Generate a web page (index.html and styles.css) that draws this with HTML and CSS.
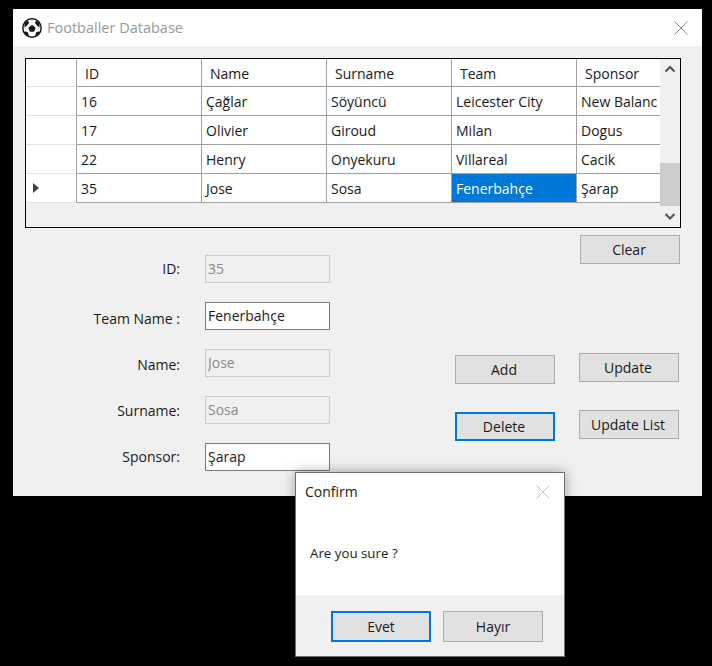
FILE: index.html
```html
<!DOCTYPE html>
<html lang="en">
<head>
<meta charset="UTF-8">
<meta name="viewport" content="width=device-width, initial-scale=1.0">
<title>Footballer Database</title>
<link rel="stylesheet" href="styles.css">
</head>
<body>

<div class="window main-window">
    <div class="titlebar">
        <svg class="ball" width="20" height="20" viewBox="0 0 20 20">
            <circle cx="10" cy="10" r="9.200" fill="#fff" stroke="#151515" stroke-width="1.500"/>
            <path d="M10 7l3.600 2.600-1.400 4.200H7.800L6.400 9.600z" fill="#151515"/>
            <path d="M2.500 5l3.500-2.500 1 2.500-3 3.500-1.500 1z" fill="#151515"/>
            <path d="M17.500 5L14 2.500 13 5l3 3.500 1.500 1z" fill="#151515"/>
            <path d="M2.500 13.500l3 .5 1.500 3.500-1 .5-3-2.500z" fill="#151515"/>
            <path d="M17.500 13.500l-3 .5-1.500 3.500 1 .5 3-2.500z" fill="#151515"/>
        </svg>
        <span class="window-title">Footballer Database</span>
        <svg class="close" width="14" height="14" viewBox="0 0 14 14"><path d="M.5.5l13 13M13.500.5l-13 13" stroke="#8c8c8c" fill="none"/></svg>
    </div>

    <div class="content">
        <div class="grid-box">
            <div class="grid-area">
                <table class="grid">
                    <thead>
                        <tr>
                            <th class="row-head"></th>
                            <th>ID</th>
                            <th>Name</th>
                            <th>Surname</th>
                            <th>Team</th>
                            <th class="last">Sponsor</th>
                        </tr>
                    </thead>
                    <tbody>
                        <tr>
                            <td class="row-head"></td>
                            <td>16</td>
                            <td>Çağlar</td>
                            <td>Söyüncü</td>
                            <td>Leicester City</td>
                            <td class="last"><div class="clip">New Balanc</div></td>
                        </tr>
                        <tr>
                            <td class="row-head"></td>
                            <td>17</td>
                            <td>Olivier</td>
                            <td>Giroud</td>
                            <td>Milan</td>
                            <td class="last">Dogus</td>
                        </tr>
                        <tr>
                            <td class="row-head"></td>
                            <td>22</td>
                            <td>Henry</td>
                            <td>Onyekuru</td>
                            <td>Villareal</td>
                            <td class="last">Cacik</td>
                        </tr>
                        <tr>
                            <td class="row-head"><span class="arrow"></span></td>
                            <td>35</td>
                            <td>Jose</td>
                            <td>Sosa</td>
                            <td class="selected">Fenerbahçe</td>
                            <td class="last">Şarap</td>
                        </tr>
                    </tbody>
                </table>
            </div>
            <div class="scrollbar">
                <svg width="20" height="17" viewBox="0 0 20 17"><path d="M5.500 12.500L10 8l4.500 4.500" stroke="#505050" stroke-width="2" fill="none"/></svg>
                <div class="track"><div class="thumb"></div></div>
                <svg width="20" height="17" viewBox="0 0 20 17"><path d="M5.500 4L10 8.500 14.500 4" stroke="#505050" stroke-width="2" fill="none"/></svg>
            </div>
        </div>

        <div class="lower">
            <div class="form">
                <label class="label-id">ID:</label>
                <input class="field" type="text" value="35" disabled>
                <label class="label-team">Team Name :</label>
                <input class="field" type="text" value="Fenerbahçe">
                <label class="label-name">Name:</label>
                <input class="field" type="text" value="Jose" disabled>
                <label>Surname:</label>
                <input class="field" type="text" value="Sosa" disabled>
                <label class="label-id">Sponsor:</label>
                <input class="field" type="text" value="Şarap">
            </div>
            <div class="actions-left">
                <button class="btn">Add</button>
                <button class="btn focused">Delete</button>
            </div>
            <div class="actions-right">
                <button class="btn">Clear</button>
                <button class="btn">Update</button>
                <button class="btn">Update List</button>
            </div>
        </div>
    </div>
</div>

<div class="window dialog">
    <div class="dialog-top">
        <div class="dialog-title">
            <span>Confirm</span>
            <svg class="close" width="14" height="14" viewBox="0 0 14 14"><path d="M.5.5l13 13M13.500.5l-13 13" stroke="#c4c4c4" fill="none"/></svg>
        </div>
        <p class="message">Are you sure ?</p>
    </div>
    <div class="dialog-footer">
        <button class="btn focused">Evet</button>
        <button class="btn">Hayır</button>
    </div>
</div>

</body>
</html>
```

FILE: styles.css
```css
body {
    margin: 0;
    height: 666px;
    overflow: hidden;
    background-color: #000;
    font-family: "Open Sans", "Noto Sans", sans-serif;
    font-size: 14px;
    color: #1a1a1a;
}

.window {
    position: absolute;
    box-sizing: border-box;
    background-color: #f0f0f0;
}

.main-window {
    left: 13px;
    top: 9px;
    width: 689px;
    height: 487px;
}

.titlebar {
    display: flex;
    align-items: center;
    height: 37px;
    padding: 0 14px 0 9px;
    background-color: #fff;
}

.ball {
    margin-right: 5px;
}

.window-title {
    flex: 1;
    font-size: 14.5px;
    color: #999;
}

.content {
    padding: 12px 22px 0 12px;
}

.grid-box {
    display: flex;
    box-sizing: border-box;
    width: 656px;
    height: 170px;
    border: 1px solid #000;
}

.grid-area {
    width: 634px;
    overflow: hidden;
}

.grid {
    table-layout: fixed;
    width: 635px;
    border-collapse: separate;
    border-spacing: 0;
}

.grid th,
.grid td {
    box-sizing: border-box;
    width: 125px;
    height: 29px;
    padding: 0 4px;
    background-color: #fff;
    border-right: 1px solid #a0a0a0;
    border-bottom: 1px solid #a0a0a0;
    font-weight: normal;
    text-align: left;
    white-space: nowrap;
}

.grid th {
    height: 28px;
    padding: 2px 4px 0 8px;
}

.grid .row-head {
    width: 51px;
    padding: 0 0 0 7px;
    border-bottom-color: #e4e4e4;
}

.grid .last {
    width: 84px;
    border-right: none;
}

.grid .selected {
    background-color: #0078d7;
    color: #fff;
}

.clip {
    overflow: hidden;
}

.arrow {
    display: block;
    width: 0;
    height: 0;
    border-left: 6px solid #404040;
    border-top: 5px solid transparent;
    border-bottom: 5px solid transparent;
}

.scrollbar {
    display: flex;
    flex-direction: column;
    width: 20px;
    background-color: #f0f0f0;
}

.track {
    flex: 1;
    display: flex;
    flex-direction: column;
    justify-content: flex-end;
}

.thumb {
    height: 43px;
    margin-bottom: 4px;
    background-color: #cdcdcd;
}

.lower {
    display: flex;
}

.form {
    display: grid;
    grid-template-columns: 155px 125px;
    grid-auto-rows: 28px;
    column-gap: 25px;
    row-gap: 19px;
    align-items: center;
    align-self: flex-start;
    margin-top: 27px;
}

.form label {
    text-align: right;
}

.form .label-id {
    padding-bottom: 2px;
}

.form .label-team {
    padding-top: 4px;
}

.form .label-name {
    padding-top: 2px;
}

.field {
    box-sizing: border-box;
    width: 125px;
    height: 28px;
    padding: 0 2px 2px;
    border: 1px solid #7a7a7a;
    background-color: #fff;
    font: inherit;
    color: #1a1a1a;
}

.field:disabled {
    border-color: #ccc;
    background-color: #f0f0f0;
    color: #8a8a8a;
}

.btn {
    box-sizing: border-box;
    width: 100px;
    height: 29px;
    padding: 0 2px 0 0;
    border: 1px solid #adadad;
    background-color: #e1e1e1;
    font: inherit;
    color: #1a1a1a;
}

.btn.focused {
    border: 2px solid #0078d7;
}

.actions-left {
    display: flex;
    flex-direction: column;
    gap: 28px;
    margin-top: 127px;
    margin-left: 125px;
}

.actions-right {
    display: flex;
    flex-direction: column;
    margin-top: 7px;
    margin-left: 25px;
}

.actions-right .btn:nth-child(2) {
    margin-top: 89px;
    margin-left: -1px;
}

.actions-right .btn:nth-child(3) {
    margin-top: 28px;
    margin-left: -1px;
}

.dialog {
    left: 295px;
    top: 472px;
    width: 270px;
    height: 185px;
    border: 1px solid #707070;
    box-shadow: 0 0 12px rgba(0, 0, 0, 0.35);
}

.dialog-top {
    height: 122px;
    background-color: #fff;
}

.dialog-title {
    display: flex;
    justify-content: space-between;
    align-items: center;
    padding: 9px 14px 0 9px;
}

.message {
    margin: 43px 0 0 14px;
    font-size: 13.3px;
}

.dialog-footer {
    display: flex;
    gap: 12px;
    padding: 16px 0 0 35px;
}

.dialog-footer .btn {
    height: 31px;
    padding: 0;
}
```
